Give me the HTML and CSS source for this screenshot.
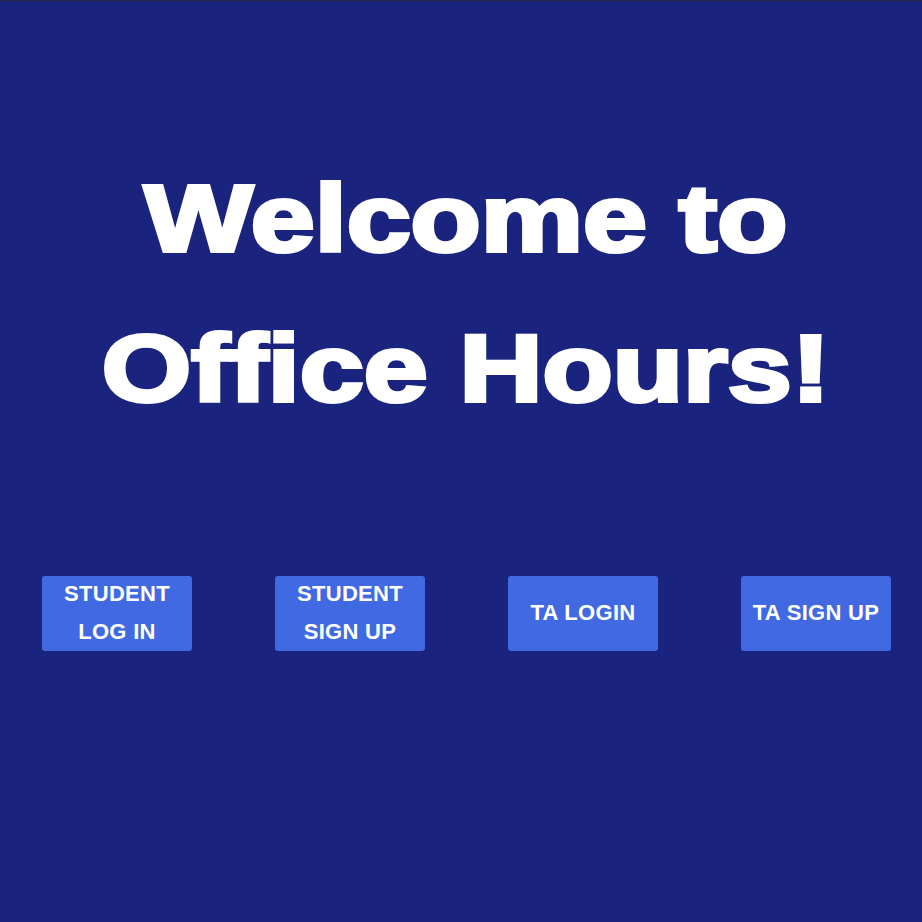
FILE: index.html
```html
<!DOCTYPE html>
<html lang="en">
<head>
<meta charset="utf-8">
<title>Office Hours</title>
<link rel="stylesheet" href="styles.css">
</head>
<body>
<main class="page">
  <h1 class="title"><span class="title-text">Welcome to<br>Office Hours!</span></h1>
  <div class="actions">
    <button class="btn">STUDENT<br>LOG IN</button>
    <button class="btn">STUDENT<br>SIGN UP</button>
    <button class="btn">TA LOGIN</button>
    <button class="btn">TA SIGN UP</button>
  </div>
</main>
</body>
</html>
```

FILE: styles.css
```css
html, body {
  margin: 0;
  padding: 0;
  height: 100%;
}
body {
  background: #1a237e;
  border-top: 1px solid #2a2a3c;
  box-sizing: border-box;
  font-family: "Liberation Sans", Arial, sans-serif;
  overflow: hidden;
}
.page {
  display: flex;
  flex-direction: column;
}
.title {
  margin: 142px 0 0 0;
  padding-left: 10px;
  text-align: center;
  color: #fff;
  font-size: 95px;
  line-height: 150px;
  font-weight: 700;
}
.title-text {
  display: inline-block;
  -webkit-text-stroke: 4px #fff;
  transform: scaleX(1.21);
}
.actions {
  display: flex;
  gap: 83px;
  padding-left: 42px;
  margin-top: 133px;
}
.btn {
  width: 150px;
  height: 75px;
  border: none;
  border-radius: 3px;
  background: #4169e1;
  color: #fff;
  font-family: "Liberation Sans", Arial, sans-serif;
  font-weight: 700;
  font-size: 22px;
  line-height: 38px;
  letter-spacing: 0.3px;
  padding: 0 0 2px 0;
  display: flex;
  align-items: center;
  justify-content: center;
  text-align: center;
}
```
